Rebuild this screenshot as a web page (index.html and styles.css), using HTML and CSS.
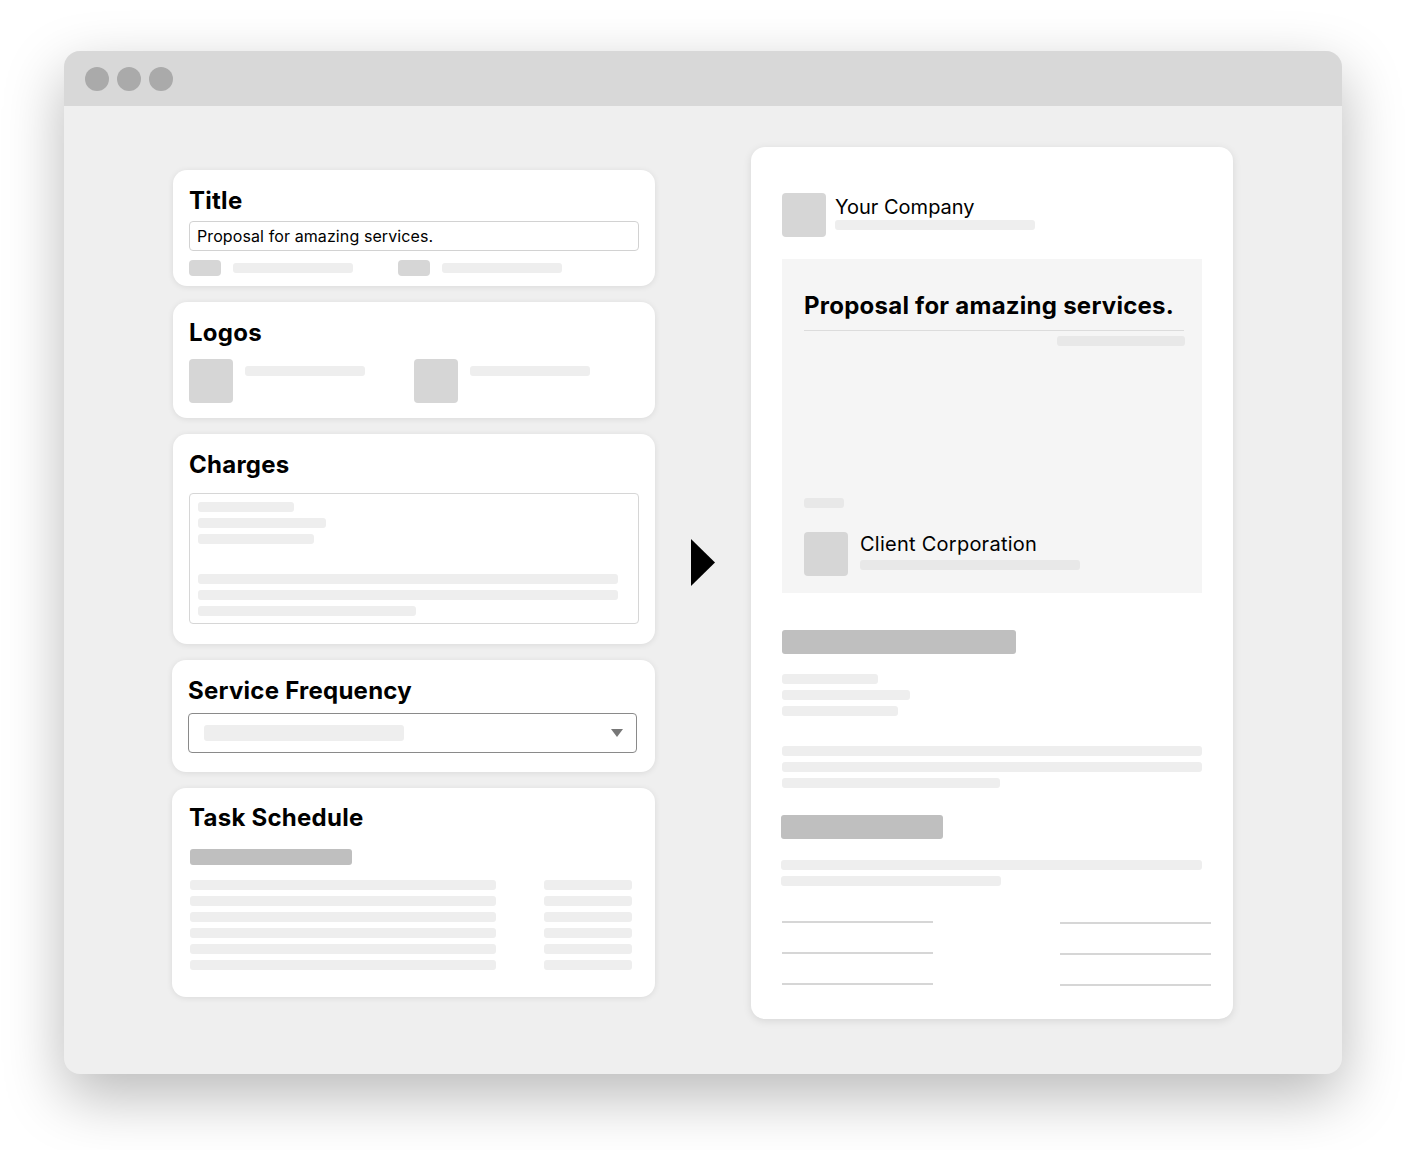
FILE: index.html
```html
<!DOCTYPE html>
<html lang="en">
<head>
  <meta charset="UTF-8" />
  <meta name="viewport" content="width=device-width, initial-scale=1.0"/>
  <title>Proposal Builder</title>
  <link rel="stylesheet" href="styles.css">
</head>
<body>

  <div class="window">
    <div class="titlebar">
      <span class="dot"></span>
      <span class="dot"></span>
      <span class="dot"></span>
    </div>

    <div class="content">
      <div class="editor">

        <div class="card card-title">
          <h2>Title</h2>
          <div class="input">Proposal for amazing services.</div>
          <div class="pill-row">
            <div class="pill-item"><span class="pill"></span><span class="line w120"></span></div>
            <div class="pill-item"><span class="pill"></span><span class="line w120"></span></div>
          </div>
        </div>

        <div class="card card-logos">
          <h2>Logos</h2>
          <div class="logo-row">
            <div class="logo-item"><span class="square"></span><span class="line w120"></span></div>
            <div class="logo-item"><span class="square"></span><span class="line w120"></span></div>
          </div>
        </div>

        <div class="card card-charges">
          <h2>Charges</h2>
          <div class="textbox">
            <div class="stack">
              <span class="line w96"></span>
              <span class="line w128"></span>
              <span class="line w116"></span>
            </div>
            <div class="stack gap-top">
              <span class="line full"></span>
              <span class="line full"></span>
              <span class="line w218"></span>
            </div>
          </div>
        </div>

        <div class="card card-freq shift">
          <h2>Service Frequency</h2>
          <div class="select">
            <span class="select-value"></span>
            <span class="caret"></span>
          </div>
        </div>

        <div class="card card-tasks shift">
          <h2>Task Schedule</h2>
          <span class="bar w162"></span>
          <div class="task-grid">
            <span class="line"></span><span class="line"></span>
            <span class="line"></span><span class="line"></span>
            <span class="line"></span><span class="line"></span>
            <span class="line"></span><span class="line"></span>
            <span class="line"></span><span class="line"></span>
            <span class="line"></span><span class="line"></span>
          </div>
        </div>

      </div>

      <svg class="arrow" width="24" height="47" viewBox="0 0 24 47">
        <polygon points="0,0 24,23.5 0,47" fill="#000"/>
      </svg>

      <div class="preview">
        <div class="company">
          <span class="square"></span>
          <div class="company-text">
            <div class="company-name">Your Company</div>
            <span class="line w200"></span>
          </div>
        </div>

        <div class="cover">
          <h1>Proposal for amazing services.</h1>
          <span class="line w128 right"></span>
          <span class="line w40 spacer"></span>
          <div class="company client">
            <span class="square"></span>
            <div class="company-text">
              <div class="company-name">Client Corporation</div>
              <span class="line w220"></span>
            </div>
          </div>
        </div>

        <span class="bar w234 section-1"></span>
        <div class="stack mt20">
          <span class="line w96"></span>
          <span class="line w128"></span>
          <span class="line w116"></span>
        </div>
        <div class="stack mt30">
          <span class="line full"></span>
          <span class="line full"></span>
          <span class="line w218"></span>
        </div>

        <span class="bar w162 section-2"></span>
        <div class="stack mt21 nudge">
          <span class="line full"></span>
          <span class="line w220"></span>
        </div>

        <div class="signatures">
          <div class="sig-col">
            <span class="rule"></span>
            <span class="rule"></span>
            <span class="rule"></span>
          </div>
          <div class="sig-col low">
            <span class="rule"></span>
            <span class="rule"></span>
            <span class="rule"></span>
          </div>
        </div>
      </div>
    </div>
  </div>

</body>
</html>
```

FILE: styles.css
```css
body {
  margin: 0;
  padding: 51px 0 76px 64px;
  background: #fff;
  font-family: Inter, 'Noto Sans', sans-serif;
  color: #000;
}
.window {
  width: 1278px;
  height: 1023px;
  background: #efefef;
  border-radius: 16px;
  overflow: hidden;
  box-shadow: 0 22px 60px rgba(0, 0, 0, 0.28);
}
.titlebar {
  height: 55px;
  background: #d8d8d8;
  display: flex;
  align-items: center;
  gap: 8px;
  padding-left: 21px;
  padding-top: 1px;
  box-sizing: border-box;
}
.dot {
  width: 24px;
  height: 24px;
  border-radius: 50%;
  background: #aaa;
}
.content {
  display: flex;
  align-items: flex-start;
  padding-left: 109px;
}
.editor {
  width: 482px;
  margin-top: 64px;
  display: flex;
  flex-direction: column;
  gap: 16px;
}
.card {
  background: #fff;
  border-radius: 14px;
  padding: 16px 16px 16px;
  box-shadow: 0 1px 6px rgba(0, 0, 0, 0.09);
}
.card.shift {
  margin-left: -1px;
}
h2 {
  margin: 0;
  font-size: 24px;
  line-height: 29px;
  font-weight: 700;
  letter-spacing: 0.25px;
}
.line {
  display: block;
  height: 10px;
  border-radius: 3px;
  background: #eee;
}
.bar {
  display: block;
  border-radius: 3px;
  background: #bfbfbf;
}
.w40 { width: 40px; }
.w96 { width: 96px; }
.w116 { width: 116px; }
.w120 { width: 120px; }
.w128 { width: 128px; }
.w162 { width: 162px; }
.w200 { width: 200px; }
.w218 { width: 218px; }
.w220 { width: 220px; }
.full { width: 100%; }

.square {
  display: block;
  width: 44px;
  height: 44px;
  border-radius: 4px;
  background: #d6d6d6;
  flex-shrink: 0;
}

/* title card */
.card-title {
  padding-bottom: 10px;
}
.input {
  margin-top: 6px;
  height: 30px;
  border: 1px solid #d2d2d2;
  border-radius: 4px;
  box-sizing: border-box;
  padding: 0 7px;
  font-size: 16px;
  line-height: 28px;
  letter-spacing: 0.1px;
}
.pill-row {
  margin-top: 9px;
  display: grid;
  grid-template-columns: 209px 1fr;
}
.pill-item {
  display: flex;
  align-items: center;
  gap: 12px;
}
.pill {
  width: 32px;
  height: 16px;
  border-radius: 4px;
  background: #d6d6d6;
}

/* logos card */
.card-logos {
  padding-bottom: 15px;
}
.logo-row {
  margin-top: 12px;
  display: grid;
  grid-template-columns: 225px 1fr;
}
.logo-item {
  display: flex;
  align-items: flex-start;
  gap: 12px;
}
.logo-item .line {
  margin-top: 7px;
}

/* charges card */
.card-charges {
  padding-bottom: 20px;
}
.textbox {
  margin-top: 14px;
  border: 1px solid #d6d6d6;
  border-radius: 4px;
  padding: 8px 20px 7px 8px;
}
.stack {
  display: flex;
  flex-direction: column;
  gap: 6px;
}
.gap-top {
  margin-top: 30px;
}

/* frequency card */
.card-freq {
  padding: 16px 18px 19px 16px;
}
.select {
  margin-top: 8px;
  height: 40px;
  box-sizing: border-box;
  border: 1px solid #8a8a8a;
  border-radius: 4px;
  padding: 0 13px 0 15px;
  display: flex;
  align-items: center;
  justify-content: space-between;
}
.select-value {
  width: 200px;
  height: 16px;
  border-radius: 3px;
  background: #eee;
}
.caret {
  width: 0;
  height: 0;
  border-left: 6px solid transparent;
  border-right: 6px solid transparent;
  border-top: 8px solid #777;
}

/* task card */
.card-tasks {
  padding: 15px 23px 27px 18px;
}
.card-tasks h2 {
  margin-left: -1px;
}
.card-tasks .w162 {
  margin-top: 17px;
  height: 16px;
}
.task-grid {
  margin-top: 15px;
  display: grid;
  grid-template-columns: 306px 88px;
  justify-content: space-between;
  row-gap: 6px;
}

/* arrow */
.arrow {
  display: block;
  margin: 433px 36px 0 36px;
}

/* preview page */
.preview {
  width: 482px;
  height: 872px;
  margin-top: 41px;
  box-sizing: border-box;
  padding: 46px 31px 0 31px;
  background: #fff;
  border-radius: 14px;
  box-shadow: 0 2px 8px rgba(0, 0, 0, 0.1);
}
.company {
  display: flex;
  align-items: flex-start;
  gap: 9px;
}
.company-text {
  padding-top: 2px;
}
.company-name {
  font-size: 20px;
  line-height: 24px;
  margin-bottom: 1px;
}
.cover {
  margin-top: 22px;
  background: #f5f5f5;
  padding: 32px 18px 17px 22px;
  display: flex;
  flex-direction: column;
}
.cover h1 {
  margin: 0;
  font-size: 24px;
  line-height: 29px;
  font-weight: 700;
  letter-spacing: 0.25px;
  padding-bottom: 10px;
  border-bottom: 1px solid #dcdcdc;
}
.cover .line {
  background: #e8e8e8;
}
.cover .right {
  align-self: flex-end;
  margin: 5px -1px 0 0;
}
.cover .spacer {
  margin-top: 152px;
}
.client {
  margin-top: 24px;
  gap: 12px;
}
.client .company-text {
  padding-top: 0;
}
.client .company-name {
  margin-bottom: 4px;
  letter-spacing: 0.25px;
}
.section-1 {
  width: 234px;
  height: 24px;
  margin-top: 37px;
}
.mt20 { margin-top: 20px; }
.mt30 { margin-top: 30px; }
.mt21 { margin-top: 21px; }
.section-2 {
  height: 24px;
  margin: 27px 0 0 -1px;
}
.nudge {
  margin-left: -1px;
}
.signatures {
  margin-top: 35px;
  width: 429px;
  display: flex;
  justify-content: space-between;
}
.sig-col {
  width: 151px;
  display: flex;
  flex-direction: column;
  gap: 29px;
}
.sig-col.low {
  margin-top: 1px;
}
.rule {
  display: block;
  height: 2px;
  background: #d6d6d6;
}
```
